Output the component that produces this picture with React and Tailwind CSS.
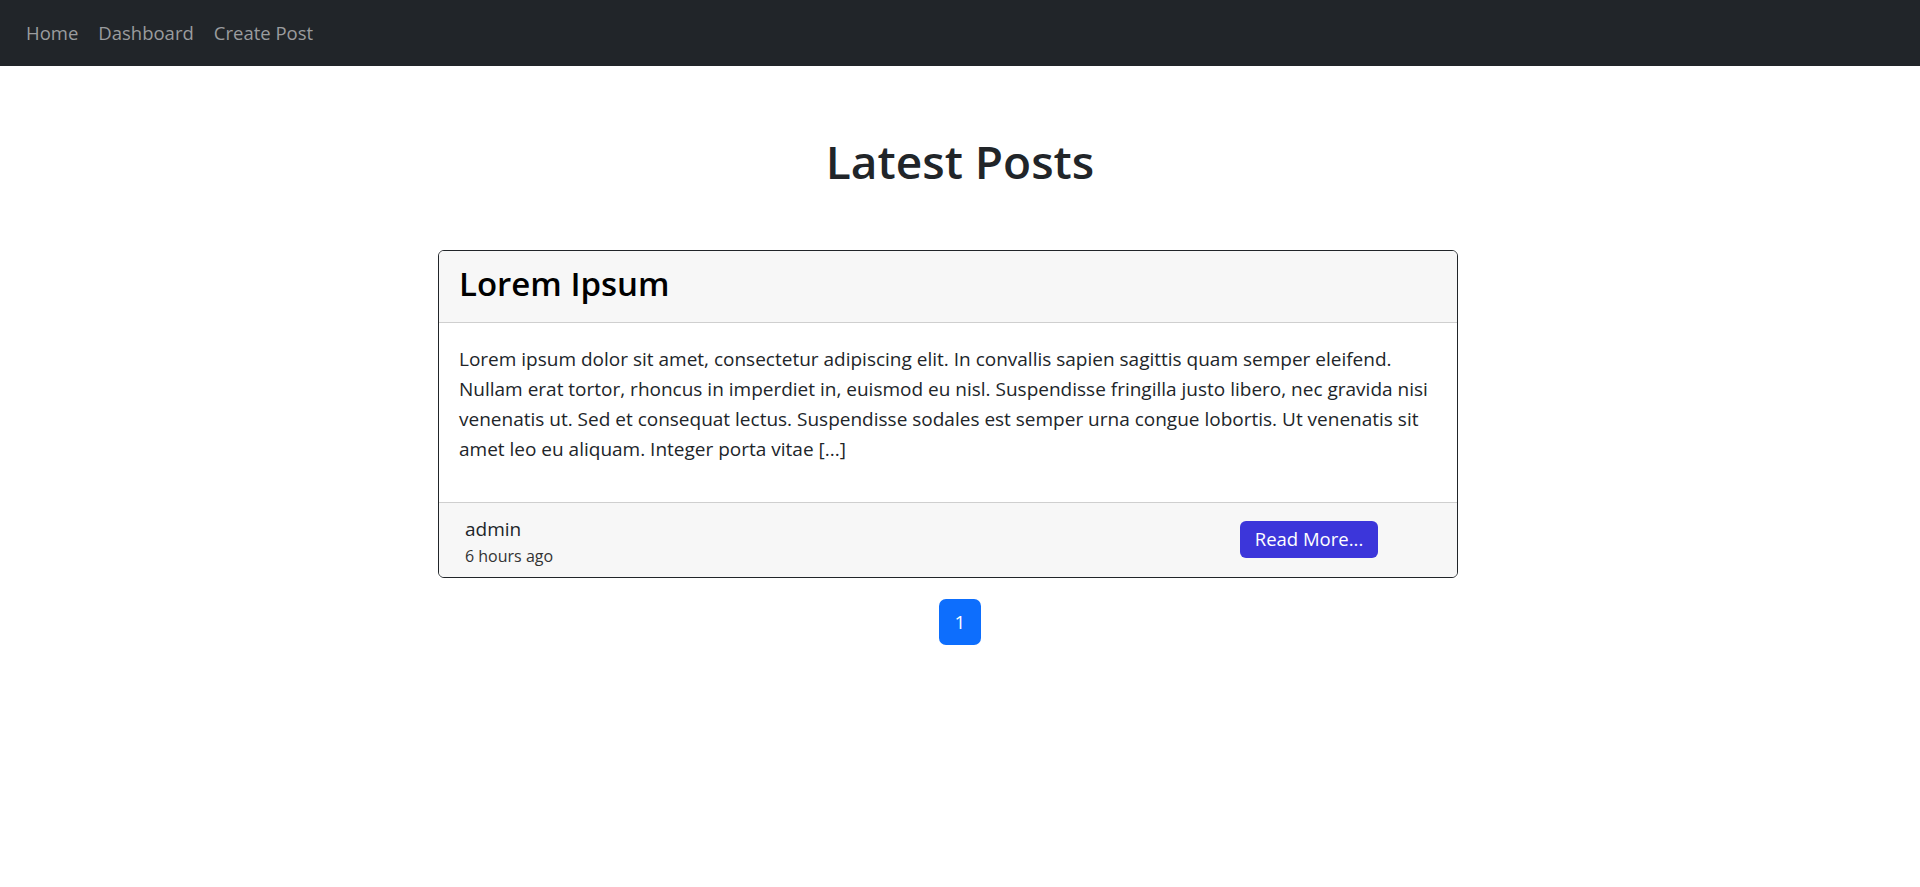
import React from 'react';

const body =
    'Lorem ipsum dolor sit amet, consectetur adipiscing elit. In convallis sapien sagittis quam semper eleifend. Nullam erat tortor, rhoncus in imperdiet in, euismod eu nisl. Suspendisse fringilla justo libero, nec gravida nisi venenatis ut. Sed et consequat lectus. Suspendisse sodales est semper urna congue lobortis. Ut venenatis sit amet leo eu aliquam. Integer porta vitae [...]';

const App = () => {
    return (
        <div className="min-h-[887px] bg-white text-[#212529] font-['Open_Sans',sans-serif]">
            {/* Navbar */}
            <nav className="h-[66px] bg-[#212529] flex items-center px-[26px] gap-[20px] text-[18.5px] leading-[26px] text-[#9a9c9e]">
                <a href="#">Home</a>
                <a href="#">Dashboard</a>
                <a href="#">Create Post</a>
            </nav>

            <h1 className="mt-[67px] text-center text-[46px] leading-[56px] font-semibold text-[#212529]">
                Latest Posts
            </h1>

            <div className="mt-[61px] pl-[438px]">
                <div className="w-[1020px] border border-[#212529] rounded-[6px] overflow-hidden">
                    <div className="h-[72px] bg-[#f7f7f7] border-b border-[#cfcfcf] pl-[20px] pb-[6px] flex items-center">
                        <h2 className="text-[33px] font-semibold text-black leading-none">Lorem Ipsum</h2>
                    </div>
                    <div className="pl-[20px] pr-[16px] pt-[21px] pb-[38px]">
                        <p className="text-[19px] leading-[30px]">{body}</p>
                    </div>
                    <div className="h-[75px] bg-[#f7f7f7] border-t border-[#cfcfcf] flex items-center justify-between pl-[26px] pr-[79px]">
                        <div className="self-start flex flex-col pt-[11px]">
                            <span className="text-[19px] leading-[30px]">admin</span>
                            <span className="text-[16px] leading-[24px] text-[#333]">6 hours ago</span>
                        </div>
                        <button className="h-[37px] w-[138px] rounded-[6px] bg-[#3c36da] text-white text-[18.5px] leading-none mb-[1px]">
                            Read More...
                        </button>
                    </div>
                </div>
            </div>

            {/* Pagination */}
            <div className="mt-[21px] flex justify-center">
                <span className="w-[42px] h-[46px] rounded-[7px] bg-[#0d6efd] text-white text-[19px] flex items-center justify-center">
                    1
                </span>
            </div>
        </div>
    );
};

export default App;
